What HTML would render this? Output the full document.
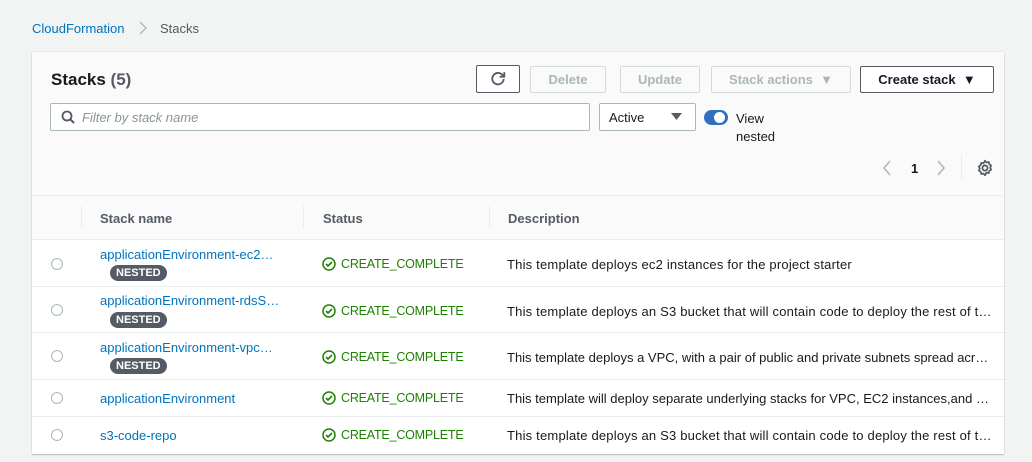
<!DOCTYPE html>
<html><head><meta charset="utf-8"><style>
*{box-sizing:border-box;margin:0;padding:0}
body{width:1032px;height:462px;background:#f2f3f3;font-family:"Liberation Sans",Arial,sans-serif;font-size:13px;color:#16191f;position:relative;overflow:hidden}
.a{position:absolute}
.panel{left:32px;top:52px;width:972px;height:402px;background:#fafafa;box-shadow:0 1px 1px rgba(0,0,0,.2),0 0 1px rgba(0,0,0,.2)}
.btn{position:absolute;top:66px;height:27px;border:1px solid #545b64;background:#fff;border-radius:2px;font-weight:bold;font-size:13px;text-align:center;line-height:25px;color:#545b64}
.dis{border-color:#d5dbdb;color:#aab7b8;background:#fafafa}
.row{position:absolute;left:32px;width:972px;background:#fff;border-top:1px solid #eaeded}
.radio{position:absolute;left:19px;width:12px;height:12px;border:1px solid #aab7b8;border-radius:50%}
.name{position:absolute;left:68px;color:#0073bb}
.badge{position:absolute;left:78px;background:#545b64;color:#fff;font-size:11px;font-weight:bold;height:16px;line-height:16px;padding:0 6px;border-radius:8px}
.st{position:absolute;left:290px;color:#1d8102;display:flex;align-items:center;gap:5px;font-size:12.5px;letter-spacing:-0.2px}
.desc{position:absolute;left:475px;color:#16191f;letter-spacing:0.2px}
.th{position:absolute;top:211px;font-weight:bold;color:#545b64}
.sep{position:absolute;top:206px;width:1px;height:22px;background:#eaeded}
</style></head><body>
<div class="a" style="left:32px;top:21px;color:#0073bb">CloudFormation</div>
<svg class="a" style="left:138px;top:20px" width="10" height="16" viewBox="0 0 10 16"><path d="M2 2l6 6-6 6" fill="none" stroke="#aab7b8" stroke-width="1.3"/></svg>
<div class="a" style="left:160px;top:21px;color:#545b64">Stacks</div>
<div class="a panel"></div>
<div class="a" style="left:51px;top:70px;font-size:17px;font-weight:bold">Stacks <span style="color:#545b64">(5)</span></div>
<div class="btn" style="left:476px;width:44px;top:65px;height:28px"><svg width="16" height="16" viewBox="0 0 14 14" style="margin-top:5px"><path d="M11.5 4.5A5 5 0 1 0 12 7" fill="none" stroke="#545b64" stroke-width="1.6"/><path d="M12.5 1v4h-4" fill="none" stroke="#545b64" stroke-width="1.6"/></svg></div>
<div class="btn dis" style="left:530px;width:76px">Delete</div>
<div class="btn dis" style="left:620px;width:80px">Update</div>
<div class="btn dis" style="left:711px;width:140px">Stack actions &nbsp;&#9660;</div>
<div class="btn" style="left:860px;width:134px;color:#16191f">Create stack &nbsp;&#9660;</div>
<div class="a" style="left:50px;top:103px;width:540px;height:28px;background:#fff;border:1px solid #aab7b8;border-radius:2px"></div>
<svg class="a" style="left:61px;top:110px" width="14" height="14" viewBox="0 0 14 14"><circle cx="6" cy="6" r="4.5" fill="none" stroke="#545b64" stroke-width="1.8"/><path d="M9.5 9.5L13 13" stroke="#545b64" stroke-width="2"/></svg>
<div class="a" style="left:82px;top:110px;color:#879596;font-style:italic">Filter by stack name</div>
<div class="a" style="left:599px;top:103px;width:97px;height:28px;background:#fff;border:1px solid #aab7b8;border-radius:2px"></div>
<div class="a" style="left:609px;top:110px">Active</div>
<svg class="a" style="left:671px;top:113px" width="11" height="8" viewBox="0 0 11 8"><path d="M0 0h11L5.5 7z" fill="#545b64"/></svg>
<div class="a" style="left:704px;top:110px;width:24px;height:15px;border-radius:8px;background:#2f6fbd"></div>
<div class="a" style="left:714px;top:112px;width:11px;height:11px;border-radius:50%;background:#fff"></div>
<div class="a" style="left:736px;top:110px;line-height:18px">View<br>nested</div>
<svg class="a" style="left:882px;top:160px" width="10" height="16" viewBox="0 0 10 16"><path d="M8 1L2 8l6 7" fill="none" stroke="#aab7b8" stroke-width="1.5"/></svg>
<div class="a" style="left:911px;top:161px;font-weight:bold">1</div>
<svg class="a" style="left:936px;top:160px" width="10" height="16" viewBox="0 0 10 16"><path d="M2 1l6 7-6 7" fill="none" stroke="#aab7b8" stroke-width="1.5"/></svg>
<div class="a" style="left:961px;top:154px;width:1px;height:26px;background:#eaeded"></div>
<svg class="a" style="left:976px;top:159px" width="18" height="18" viewBox="0 0 16 16"><circle cx="8" cy="8" r="2.3" fill="none" stroke="#545b64" stroke-width="1.6"/><path d="M8 1.5l1.3 1.6 2-.5.5 2 1.7 1.2-.9 1.8.9 1.8-1.7 1.2-.5 2-2-.5L8 14.5l-1.3-1.6-2 .5-.5-2L2.5 10.2l.9-1.8-.9-1.8 1.7-1.2.5-2 2 .5z" fill="none" stroke="#545b64" stroke-width="1.5" stroke-linejoin="round"/></svg>
<div class="a" style="left:32px;top:195px;width:972px;height:1px;background:#eaeded"></div>
<div class="sep" style="left:81px"></div><div class="sep" style="left:303px"></div><div class="sep" style="left:489px"></div>
<div class="th" style="left:100px">Stack name</div>
<div class="th" style="left:323px">Status</div>
<div class="th" style="left:508px">Description</div>

<div class="row" style="top:239px;height:47px"><div class="radio" style="top:18px"></div><div class="name" style="top:7px">applicationEnvironment-ec2…</div><div class="badge" style="top:25px">NESTED</div><div class="st" style="top:17px"><svg width="14" height="14" viewBox="0 0 14 14"><circle cx="7" cy="7" r="6" fill="none" stroke="#1d8102" stroke-width="1.5"/><path d="M4 7l2 2 4-4" fill="none" stroke="#1d8102" stroke-width="1.6"/></svg>CREATE_COMPLETE</div><div class="desc" style="top:17px">This template deploys ec2 instances for the project starter</div></div>
<div class="row" style="top:286px;height:46px"><div class="radio" style="top:17px"></div><div class="name" style="top:6px">applicationEnvironment-rdsS…</div><div class="badge" style="top:25px">NESTED</div><div class="st" style="top:17px"><svg width="14" height="14" viewBox="0 0 14 14"><circle cx="7" cy="7" r="6" fill="none" stroke="#1d8102" stroke-width="1.5"/><path d="M4 7l2 2 4-4" fill="none" stroke="#1d8102" stroke-width="1.6"/></svg>CREATE_COMPLETE</div><div class="desc" style="top:17px">This template deploys an S3 bucket that will contain code to deploy the rest of t…</div></div>
<div class="row" style="top:332px;height:47px"><div class="radio" style="top:17px"></div><div class="name" style="top:7px">applicationEnvironment-vpc…</div><div class="badge" style="top:25px">NESTED</div><div class="st" style="top:17px"><svg width="14" height="14" viewBox="0 0 14 14"><circle cx="7" cy="7" r="6" fill="none" stroke="#1d8102" stroke-width="1.5"/><path d="M4 7l2 2 4-4" fill="none" stroke="#1d8102" stroke-width="1.6"/></svg>CREATE_COMPLETE</div><div class="desc" style="top:17px;letter-spacing:0">This template deploys a VPC, with a pair of public and private subnets spread acr…</div></div>
<div class="row" style="top:379px;height:37px"><div class="radio" style="top:12px"></div><div class="name" style="top:11px">applicationEnvironment</div><div class="st" style="top:11px"><svg width="14" height="14" viewBox="0 0 14 14"><circle cx="7" cy="7" r="6" fill="none" stroke="#1d8102" stroke-width="1.5"/><path d="M4 7l2 2 4-4" fill="none" stroke="#1d8102" stroke-width="1.6"/></svg>CREATE_COMPLETE</div><div class="desc" style="top:11px;letter-spacing:0">This template will deploy separate underlying stacks for VPC, EC2 instances,and …</div></div>
<div class="row" style="top:416px;height:38px"><div class="radio" style="top:12px"></div><div class="name" style="top:11px">s3-code-repo</div><div class="st" style="top:11px"><svg width="14" height="14" viewBox="0 0 14 14"><circle cx="7" cy="7" r="6" fill="none" stroke="#1d8102" stroke-width="1.5"/><path d="M4 7l2 2 4-4" fill="none" stroke="#1d8102" stroke-width="1.6"/></svg>CREATE_COMPLETE</div><div class="desc" style="top:11px">This template deploys an S3 bucket that will contain code to deploy the rest of t…</div></div>
</body></html>
